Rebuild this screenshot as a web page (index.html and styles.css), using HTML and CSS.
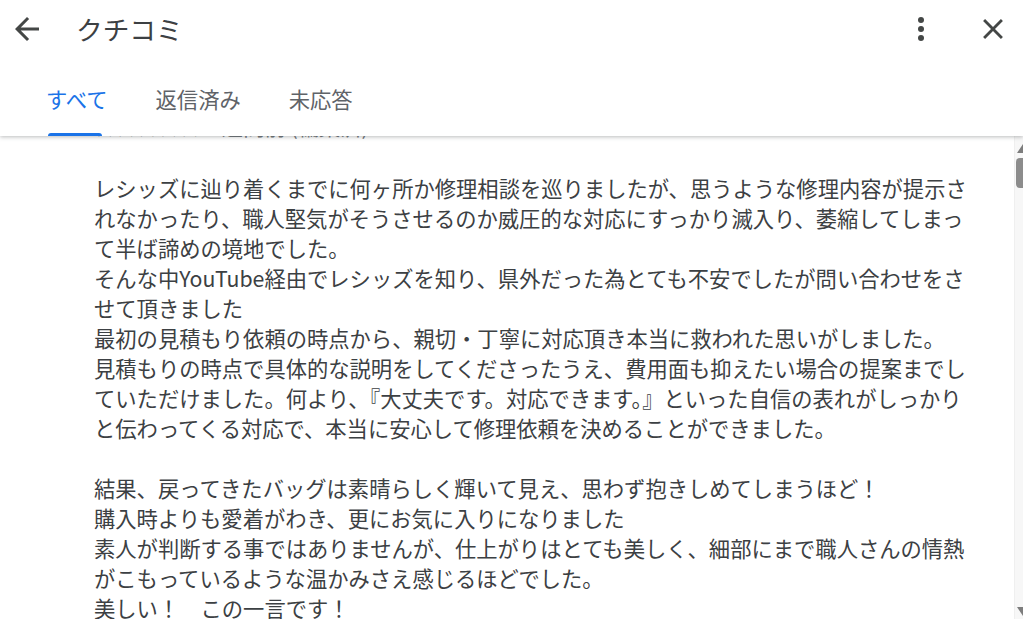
FILE: index.html
```html
<!DOCTYPE html>
<html lang="ja">
  <head>
    <meta charset="UTF-8" />
    <meta name="viewport" content="width=device-width, initial-scale=1.0" />
    <title>クチコミ</title>
    <link rel="stylesheet" href="styles.css">
  </head>
  <body>
    <div class="panel">
      <header class="header">
        <div class="topbar">
          <button class="icon-btn back" aria-label="戻る">
            <svg viewBox="0 0 24 24" width="36" height="36">
              <path d="M20 11H7.83l5.59-5.59L12 4l-8 8 8 8 1.41-1.41L7.83 13H20v-2z" />
            </svg>
          </button>
          <h1 class="title">クチコミ</h1>
          <div class="spacer"></div>
          <button class="icon-btn more" aria-label="その他">
            <svg viewBox="0 0 24 24" width="36" height="36">
              <circle cx="12" cy="6" r="2" />
              <circle cx="12" cy="12" r="2" />
              <circle cx="12" cy="18" r="2" />
            </svg>
          </button>
          <button class="icon-btn close" aria-label="閉じる">
            <svg viewBox="0 0 24 24" width="34" height="34">
              <path d="M19 6.41 17.59 5 12 10.59 6.41 5 5 6.41 10.59 12 5 17.59 6.41 19 12 13.41 17.59 19 19 17.59 13.41 12z" />
            </svg>
          </button>
        </div>
        <nav class="tabs">
          <div class="tab active">すべて</div>
          <div class="tab">返信済み</div>
          <div class="tab">未応答</div>
        </nav>
      </header>

      <div class="body">
        <div class="content">
          <p class="meta">★★★★★ 1 週間前 (編集済)</p>
          <p class="review">
            レシッズに辿り着くまでに何ヶ所か修理相談を巡りましたが、思うような修理内容が提示されなかったり、職人堅気がそうさせるのか威圧的な対応にすっかり滅入り、萎縮してしまって半ば諦めの境地でした。<br>
            そんな中YouTube経由でレシッズを知り、県外だった為とても不安でしたが問い合わせをさせて頂きました<br>
            最初の見積もり依頼の時点から、親切・丁寧に対応頂き本当に救われた思いがしました。<br>
            見積もりの時点で具体的な説明をしてくださったうえ、費用面も抑えたい場合の提案までしていただけました。何より、『大丈夫です。対応できます。』といった自信の表れがしっかりと伝わってくる対応で、本当に安心して修理依頼を決めることができました。<br>
            <br>
            結果、戻ってきたバッグは素晴らしく輝いて見え、思わず抱きしめてしまうほど！<br>
            購入時よりも愛着がわき、更にお気に入りになりました<br>
            素人が判断する事ではありませんが、仕上がりはとても美しく、細部にまで職人さんの情熱がこもっているような温かみさえ感じるほどでした。<br>
            美しい！　この一言です！
          </p>
        </div>
        <div class="scrollbar">
          <span class="arrow up"></span>
          <span class="thumb"></span>
          <span class="track"></span>
          <span class="arrow down"></span>
        </div>
      </div>
    </div>
  </body>
</html>
```

FILE: styles.css
```css
body {
  margin: 0;
  font-family: "Noto Sans CJK JP", "Noto Sans", sans-serif;
  background: white;
  color: #3c4043;
}

.panel {
  display: flex;
  flex-direction: column;
  height: 100vh;
  overflow: hidden;
}

.header {
  position: relative;
  z-index: 1;
  background: white;
  box-shadow: 0 1px 4px rgba(60, 64, 67, 0.35);
}

.topbar {
  display: flex;
  align-items: center;
  height: 58px;
  padding: 0 13px 0 9px;
}

.icon-btn {
  display: flex;
  align-items: center;
  justify-content: center;
  padding: 0;
  border: none;
  background: none;
  fill: #444746;
  cursor: pointer;
}

.title {
  margin: 0 0 0 31px;
  font-size: 26.7px;
  font-weight: 400;
  color: #3c4043;
  line-height: 1;
}

.spacer {
  flex: 1;
}

.more {
  margin-right: 37px;
}

.tabs {
  display: flex;
  gap: 48px;
  height: 78px;
  padding-left: 46px;
}

.tab {
  position: relative;
  padding-top: 26px;
  font-size: 21.3px;
  line-height: 30px;
  color: #5f6368;
}

.tab.active {
  color: #1a73e8;
}

.tab.active::after {
  content: "";
  position: absolute;
  left: 2px;
  right: 6px;
  bottom: 0;
  height: 3px;
  border-radius: 3px 3px 0 0;
  background: #1a73e8;
}

.body {
  flex: 1;
  display: flex;
  min-height: 0;
}

.content {
  flex: 1;
  overflow: hidden;
  padding-left: 94px;
}

.meta {
  margin: -25px 0 0;
  font-size: 21.3px;
  line-height: 30px;
  color: #70757a;
}

.review {
  width: 880px;
  margin: 32px 0 0;
  font-size: 21.3px;
  line-height: 30px;
  color: #3c4043;
}

.scrollbar {
  display: flex;
  flex-direction: column;
  width: 8px;
  background: #f7f7f7;
  border-left: 1px solid #efefef;
}

.arrow {
  width: 0;
  height: 0;
  margin-left: auto;
  border-left: 6px solid transparent;
}

.arrow.up {
  margin-top: 8px;
  border-bottom: 9px solid #7d7d7d;
}

.arrow.down {
  margin-bottom: 3px;
  border-top: 9px solid #7d7d7d;
}

.thumb {
  height: 30px;
  margin: 5px 0 0 1px;
  border-radius: 4px 0 0 4px;
  background: #8c8c8c;
}

.track {
  flex: 1;
}
```
